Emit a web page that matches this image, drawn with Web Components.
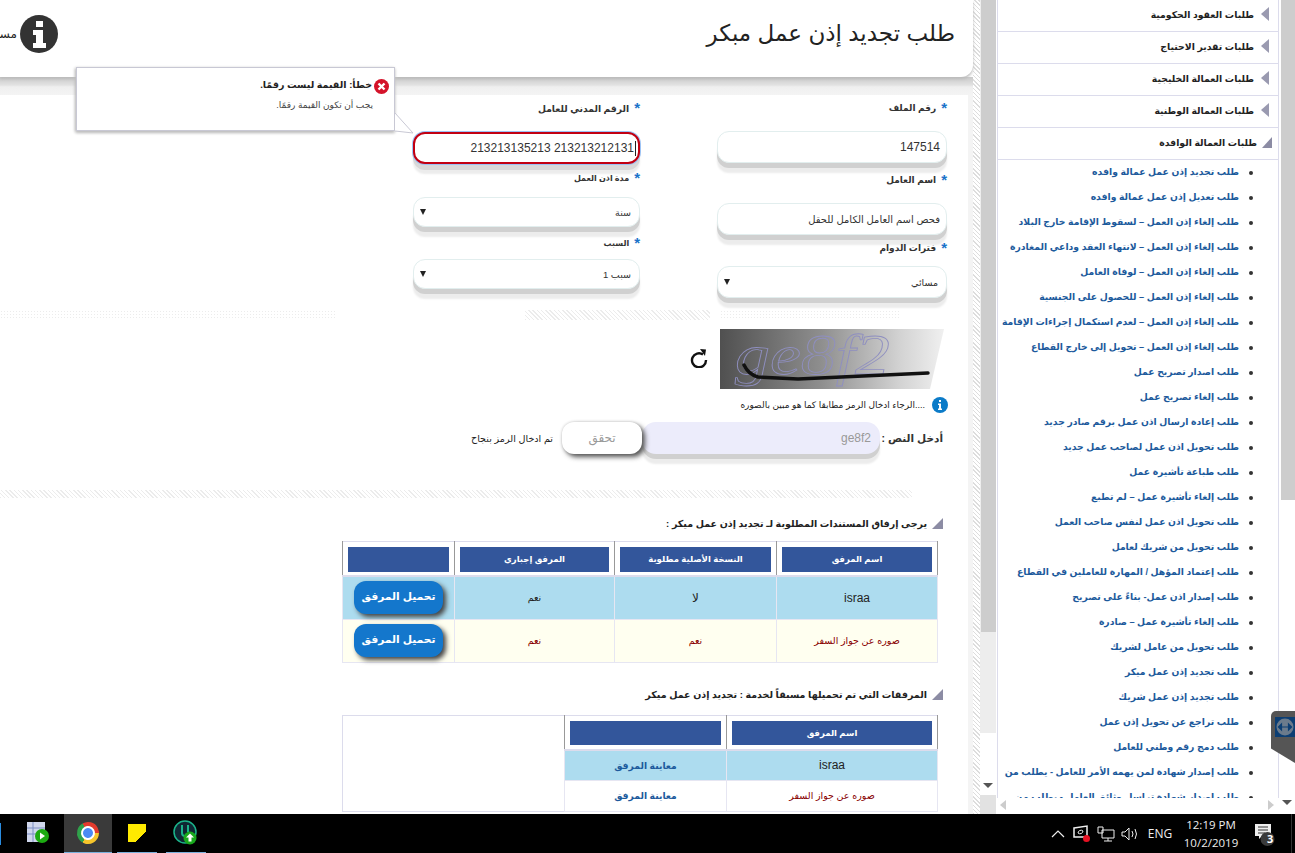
<!DOCTYPE html>
<html lang="ar">
<head>
<meta charset="utf-8">
<title>طلب تجديد إذن عمل مبكر</title>
<style>
  html, body { margin: 0; height: 853px; overflow: hidden; background: #fff; font-family: "Liberation Sans", "DejaVu Sans", sans-serif; }
</style>
</head>
<body>
<app-shell>
  <side-menu slot="side"></side-menu>
  <page-scroll slot="scroll"></page-scroll>
  <page-main slot="main"></page-main>
</app-shell>
<task-bar></task-bar>

<script>
// base: every component only declares getStyles / getTemplate
class Base extends HTMLElement {
  constructor() {
    super();
    this.attachShadow({ mode: "open" });
  }
  getStyles() { return ""; }
  getTemplate() { return ""; }
  render() {
    const template = document.createElement("template");
    template.innerHTML = `<style>${this.getStyles()}</style>${this.getTemplate()}`;
    this.shadowRoot.appendChild(template.content.cloneNode(true));
  }
  connectedCallback() {
    if (!this.shadowRoot.firstChild) this.render();
  }
}

const ARABIC = `"Liberation Sans", "DejaVu Sans", sans-serif`;
const HATCH = "repeating-linear-gradient(45deg,#ececec 0 1px,#fff 1px 3px)";

class AppShell extends Base {
  getStyles() {
    return `
      :host { display: flex; direction: rtl; height: 814px; overflow: hidden; position: relative; }
      .tv { position: absolute; left: 1271px; top: 711px; width: 24px; height: 52px; background: #555; border-radius: 5px 0 0 0;
            clip-path: polygon(0 0,100% 0,100% 100%,0 72%); }
      .tv i { position: absolute; left: 4px; top: 6px; width: 20px; height: 20px; background: #0c3e73; }
      .tv svg { position: absolute; left: 4px; top: 6px; }
    `;
  }
  getTemplate() {
    return `
      <slot name="side"></slot><slot name="scroll"></slot><slot name="main"></slot>
      <div class="tv"><i></i><svg width="20" height="20" viewBox="0 0 20 20"><circle cx="10" cy="10" r="8.5" fill="#6b7b8c"/><path d="M3.5 10h13M3.5 10l3-3v6zM16.5 10l-3-3v6z" fill="#0c3e73" stroke="#0c3e73" stroke-width="1.2"/></svg></div>
    `;
  }
}

class SideMenu extends Base {
  getStyles() {
    return `
      :host { display: flex; width: 299px; height: 814px; flex: none; font-family: ${ARABIC}; background: #fff; }
      .gutter { width: 16px; flex: none; display: flex; flex-direction: column; }
      .gutter .thumb { height: 500px; background: #cdcdcd; margin-left: 2px; }
      .gutter .rest { flex: 1; }
      .gutter .arrow { height: 18px; position: relative; }
      .panel { width: 283px; flex: none; display: flex; flex-direction: column; }
      .clip { height: 798px; width: 282px; box-sizing: border-box; overflow: hidden; border-left: 1px solid #dcdcec; border-right: 1px solid #dcdcec; }
      .cat { height: 32px; box-sizing: border-box; border-bottom: 1px solid #dcdcec; display: flex; align-items: center; padding: 0 9px 3px 0; gap: 7px; font-size: 9.3px; font-weight: bold; color: #222; white-space: nowrap; }
      ul { margin: 0; padding: 0 39px 0 0; list-style: none; }
      li { height: 25px; line-height: 25px; font-size: 9.25px; font-weight: bold; color: #1c5a9c; white-space: nowrap; position: relative; }
      li::before { content: ""; position: absolute; right: -14px; top: 11px; width: 4px; height: 4px; border-radius: 50%; background: #333; }
      .hbar { height: 16px; position: relative; }
      .l { position: absolute; left: 4px; top: 2px; border: 5px solid transparent; border-right: 6px solid #ccc; border-left: 0; }
      .r { position: absolute; right: 5px; top: 2px; border: 5px solid transparent; border-left: 6px solid #ccc; border-right: 0; }
      .down { position: absolute; left: 3px; top: 4px; border: 5px solid transparent; border-top: 5px solid #555; border-bottom: 0; }
    `;
  }
  getTemplate() {
    const cats = ["طلبات العقود الحكومية", "طلبات تقدير الاحتياج", "طلبات العمالة الخليجية", "طلبات العمالة الوطنية"];
    const items = [
      "طلب تجديد إذن عمل عمالة وافده", "طلب تعديل إذن عمل عمالة وافده",
      "طلب إلغاء إذن العمل – لسقوط الإقامة خارج البلاد", "طلب إلغاء إذن العمل – لانتهاء العقد وداعي المغادرة",
      "طلب إلغاء إذن العمل – لوفاة العامل", "طلب إلغاء إذن العمل – للحصول على الجنسية",
      "طلب إلغاء إذن العمل – لعدم استكمال إجراءات الإقامة", "طلب إلغاء إذن العمل – تحويل إلى خارج القطاع",
      "طلب اصدار تصريح عمل", "طلب إلغاء تصريح عمل", "طلب إعادة ارسال اذن عمل برقم صادر جديد",
      "طلب تحويل اذن عمل لصاحب عمل جديد", "طلب طباعة تأشيرة عمل", "طلب إلغاء تأشيرة عمل – لم تطبع",
      "طلب تحويل اذن عمل لنفس صاحب العمل", "طلب تحويل من شريك لعامل",
      "طلب إعتماد المؤهل / المهارة للعاملين في القطاع", "طلب إصدار اذن عمل- بناءً على تصريح",
      "طلب إلغاء تأشيرة عمل – صادرة", "طلب تحويل من عامل لشريك", "طلب تجديد إذن عمل ميكر",
      "طلب تجديد إذن عمل شريك", "طلب تراجع عن تحويل إذن عمل", "طلب دمج رقم وطني للعامل",
      "طلب إصدار شهادة لمن يهمه الأمر للعامل - يطلب من", "طلب إصدار شهادة تراسل وثائق العامل - يطلب من"
    ];
    const tri = `<svg width="8" height="14" viewBox="0 0 8 14"><path d="M8 0v14L0 7z" fill="#9a9ab0"/></svg>`;
    const open = `<svg width="10" height="11" viewBox="0 0 10 11"><path d="M10 0v11H0z" fill="#8c8ca4"/></svg>`;
    return `
      <div class="gutter">
        <div class="thumb"></div><div class="rest"></div><div class="arrow"><i class="down"></i></div>
      </div>
      <div class="panel">
        <div class="clip">
          ${cats.map(c => `<div class="cat">${tri}<span>${c}</span></div>`).join("")}
          <div class="cat" style="gap:5px;padding-right:6px">${open}<span>طلبات العمالة الوافدة</span></div>
          <ul>${items.map(i => `<li>${i}</li>`).join("")}</ul>
        </div>
        <div class="hbar"><i class="r"></i><i class="l"></i></div>
      </div>
    `;
  }
}

class PageScroll extends Base {
  getStyles() {
    return `
      :host { display: flex; flex-direction: column; width: 16px; flex: none; }
      .thumb { height: 632px; background: #cdcdcd; border-left: 1px solid #eee; box-sizing: border-box; }
      .track { height: 101px; background: #ededed; }
      .blank { flex: 1; position: relative; }
      .arrow { position: absolute; left: 3px; top: 50px; border: 5px solid transparent; border-top: 5px solid #555; border-bottom: 0; }
      .end { height: 19px; background: #e2e2e2; }
    `;
  }
  getTemplate() {
    return `<div class="thumb"></div><div class="track"></div><div class="blank"><i class="arrow"></i></div><div class="end"></div>`;
  }
}

class PageMain extends Base {
  getStyles() {
    return `
      :host { display: block; width: 980px; flex: none; height: 814px; overflow: hidden; position: relative; font-family: ${ARABIC}; color: #222; }
      .hatch-side { position: absolute; top: 0; left: 973px; width: 7px; height: 100%; background: repeating-linear-gradient(45deg,#ddd 0 1px,#fff 1px 3px); }
      .side-mask { position: absolute; left: 968px; top: 95px; width: 5px; height: 719px; background: #f4f4f4; }
      .band { height: 18px; background: linear-gradient(#c9c9c9,#e2e2e2 45%,#efefef 55%,#f4f4f4); }
      .form { display: flex; gap: 77px; padding: 5px 33px 0 0; height: 203px; box-sizing: border-box; }
      .col { width: 230px; display: flex; flex-direction: column; }
      .col + .col { width: 227px; }
      .strip { height: 10px; margin-top: 12px; display: flex; }
      .strip i { display: block; height: 100%; }
      .divider { height: 8px; width: 912px; margin: 36px 68px 0 0; background: ${HATCH}; }
      .dot { background-image: radial-gradient(#ececec 35%, transparent 40%); background-size: 3px 3px; }
      .heading { display: flex; align-items: center; gap: 5px; padding-right: 37px; font-size: 9.5px; font-weight: bold; color: #222; height: 16px; white-space: nowrap; }
    `;
  }
  getTemplate() {
    const corner = `<svg width="11" height="11" viewBox="0 0 11 11"><path d="M11 0v11H0z" fill="#8c8ca4"/></svg>`;
    return `
      <page-header></page-header>
      <div class="band"></div>
      <div class="form">
        <div class="col">
          <form-field label="رقم الملف" size="9" gap="15"><text-box value="147514"></text-box></form-field>
          <form-field label="اسم العامل" size="9" gap="15" top="9"><text-box value="فحص اسم العامل الكامل للحقل" small></text-box></form-field>
          <form-field label="فترات الدوام" size="9" gap="10" top="5"><select-box value="مسائي" small></select-box></form-field>
        </div>
        <div class="col">
          <form-field label="الرقم المدني للعامل" size="9.200" gap="16"><text-box value="213213135213 213213212131" invalid></text-box></form-field>
          <form-field label="مدة اذن العمل" size="8" gap="11" top="6"><select-box value="سنة" small h="30"></select-box></form-field>
          <form-field label="السبب" size="8" gap="8" top="8"><select-box value="سبب 1" small h="30"></select-box></form-field>
        </div>
      </div>
      <div class="strip">
        <i style="width:80px"></i><i class="dot" style="width:180px"></i><i style="width:10px"></i>
        <i style="width:185px;background:${HATCH}"></i><i style="width:190px"></i>
        <i class="dot" style="width:335px"></i>
      </div>
      <captcha-box></captcha-box>
      <div class="divider"></div>
      <div class="heading" style="margin-top:17px">${corner}<span>يرجى إرفاق المستندات المطلوبة لـ تجديد إذن عمل ميكر :</span></div>
      <doc-table kind="upload" style="margin-top:10px"></doc-table>
      <div class="heading" style="margin-top:24px">${corner}<span>المرفقات التي تم تحميلها مسبقاً لخدمة : تجديد إذن عمل ميكر</span></div>
      <doc-table kind="view" style="margin-top:12px"></doc-table>
      <div class="side-mask"></div>
      <div class="hatch-side"></div>
      <error-tip></error-tip>
    `;
  }
}

class PageHeader extends Base {
  getStyles() {
    return `
      :host { display: flex; justify-content: space-between; align-items: center; height: 77px; width: 973px; box-sizing: border-box; padding: 0 18px 10px 0; background: #fff; position: relative; z-index: 1; border-bottom-right-radius: 12px; box-shadow: 0 2px 3px #bbb; margin-right: 7px; }
      h1 { margin: 0; font-size: 23px; font-weight: normal; color: #222; white-space: nowrap; }
      .info { display: flex; align-items: center; gap: 3px; direction: rtl; }
      .info span { font-size: 12px; width: 17px; overflow: hidden; white-space: nowrap; color: #222; }
    `;
  }
  getTemplate() {
    return `
      <h1>طلب تجديد إذن عمل مبكر</h1>
      <div class="info">
        <svg width="38" height="38" viewBox="0 0 38 38"><circle cx="19" cy="19" r="19" fill="#333"/><path d="M16 6h7v6h-7zM13 15h10v13h3v5H13v-5h3v-8h-3z" fill="#fff"/></svg>
        <span>مساعدة</span>
      </div>
    `;
  }
}

class FormField extends Base {
  getStyles() {
    const gap = this.getAttribute("gap") || 10;
    const top = this.getAttribute("top") || 0;
    return `
      :host { display: block; margin-top: ${top}px; }
      label { display: flex; gap: 5px; height: 16px; align-items: center; font-size: ${this.getAttribute("size")}px; font-weight: bold; color: #333; white-space: nowrap; }
      b { color: #1a73c9; font-size: 15px; line-height: 10px; height: 10px; font-family: "Liberation Sans", sans-serif; }
      .ctl { margin-top: ${gap}px; }
    `;
  }
  getTemplate() {
    return `<label><b>*</b><span>${this.getAttribute("label")}</span></label><div class="ctl"><slot></slot></div>`;
  }
}

class TextBox extends Base {
  getStyles() {
    const bad = this.hasAttribute("invalid");
    return `
      :host { display: flex; height: 32px; box-sizing: border-box; background: #fff; border-radius: 12px;
        border: ${bad ? "2px solid #c20012" : "1px solid #e2eeee"};
        box-shadow: ${bad ? "0 0 0 1px #9cc3f5, 0 6px 0 #d8d8d8, 0 10px 2px #ececec" : "0 5px 0 #d0d0d0, 0 10px 2px #ececec"};
        align-items: center; padding: 0 ${bad ? 2 : 6}px 0 8px;
        font-size: ${this.hasAttribute("small") ? 10 : 12}px; color: #333; white-space: nowrap; direction: rtl; }
      span.num { unicode-bidi: plaintext; }
      i { width: 1px; height: 15px; background: #222; margin-left: 1px; }
    `;
  }
  getTemplate() {
    const caret = this.hasAttribute("invalid") ? "<i></i>" : "";
    return `${caret}<span class="num">${this.getAttribute("value")}</span>`;
  }
}

class SelectBox extends Base {
  getStyles() {
    const h = this.getAttribute("h") || 32;
    return `
      :host { display: flex; height: ${h}px; box-sizing: border-box; background: #fff; border: 1px solid #e2eeee; border-radius: 12px;
        box-shadow: 0 5px 0 #d0d0d0, 0 10px 2px #ececec; align-items: center; justify-content: space-between;
        padding: 0 8px; font-size: 9.5px; color: #333; white-space: nowrap; }
      i { border: 3px solid transparent; border-top: 6px solid #222; border-bottom: 0; display: block; margin-left: -2px; }
    `;
  }
  getTemplate() {
    return `<span>${this.getAttribute("value")}</span><i></i>`;
  }
}

class CaptchaBox extends Base {
  getStyles() {
    return `
      :host { display: block; margin-top: 9px; padding-right: 36px; font-family: ${ARABIC}; }
      .top { display: flex; align-items: center; gap: 12px; height: 60px; }
      .img { width: 224px; height: 60px; display: block; }
      .img text { direction: ltr; }
      .reload { margin-top: -3px; }
      .hint { display: flex; align-items: center; gap: 7px; height: 16px; margin: 8px -4px 0 0; font-size: 9px; color: #222; white-space: nowrap; }
      .entry { display: flex; align-items: center; margin-top: 9px; height: 32px; }
      .lab { width: 60px; font-size: 10.5px; font-weight: bold; color: #333; white-space: nowrap; margin-right: 1px; margin-left: 3px; }
      .field { width: 238px; height: 32px; box-sizing: border-box; background: #ececfb; border-radius: 14px; box-shadow: 0 5px 0 #d0d0d0, 0 10px 2px #ececec; display: flex; align-items: center; padding: 0 9px; color: #999; font-size: 12px; }
      .btn { width: 80px; height: 32px; background: #fff; border-radius: 12px; box-shadow: 3px 3px 5px #555, 0 0 3px #ccc; display: flex; align-items: center; justify-content: center; color: #999; font-size: 12px; position: relative; }
      .ok { margin-right: 9px; font-size: 9.6px; color: #222; white-space: nowrap; }
    `;
  }
  getTemplate() {
    return `
      <div class="top">
        <svg class="img" viewBox="0 0 224 60" preserveAspectRatio="none">
          <defs><linearGradient id="g" x1="0" x2="1"><stop offset="0" stop-color="#505050"/><stop offset=".45" stop-color="#8e8e8e"/><stop offset=".8" stop-color="#d2d2d2"/><stop offset="1" stop-color="#f0f0f0"/></linearGradient></defs>
          <path d="M0 0H224L210 60H0z" fill="url(#g)"/>
          <text x="15" y="45" direction="ltr" textLength="155" lengthAdjust="spacingAndGlyphs" font-family="Liberation Serif, serif" font-style="italic" font-size="58" fill="none" stroke="#8f8fc0" stroke-width="0.8">ge8f2</text>
          <path d="M24 36q4 9 14 12l40 2 130-6" fill="none" stroke="#111" stroke-width="3.5" stroke-linecap="round"/>
        </svg>
        <svg class="reload" width="18" height="20" viewBox="0 0 18 20"><path d="M13 6.500A7 7 0 1 0 16 12" fill="none" stroke="#111" stroke-width="2.400"/><path d="M10 1l6 0.500-1 6.500z" fill="#111"/></svg>
      </div>
      <div class="hint">
        <svg width="16" height="16" viewBox="0 0 16 16"><circle cx="8" cy="8" r="8" fill="#0b7bc8"/><path d="M7 3h2v2H7zM6 6.500h3v5h1v1.500H6v-1.500h1V8H6z" fill="#fff"/></svg>
        <span>....الرجاء ادخال الرمز مطابقا كما هو مبين بالصوره</span>
      </div>
      <div class="entry">
        <span class="lab">أدخل النص :</span>
        <div class="field">ge8f2</div>
        <div class="btn">تحقق</div>
        <span class="ok">تم ادخال الرمز بنجاح</span>
      </div>
    `;
  }
}

class DocTable extends Base {
  getStyles() {
    return `
      :host { display: block; width: 595px; margin-right: 42px; font-family: ${ARABIC}; }
      table { width: 595px; border-collapse: collapse; table-layout: fixed; border: 1px solid #dcdcec; font-size: 9.5px; color: #222; }
      th { padding: 5px 5px 3px; border-right: 1px solid #999; border-left: 1px solid #999; border-bottom: 2px solid #dcdcec; background: #fff; height: 25px; }
      th div { background: #33569b; color: #fff; font-size: 8.5px; font-weight: bold; height: 25px; line-height: 25px; }
      td { text-align: center; border: 1px solid #e6e6f2; padding: 0; }
      tr.blue td { background: #addcef; }
      tr.cream td { background: #fffff0; color: #800; }
      tr.plain td { background: #fff; color: #800; }
      td.lat { font-size: 12px; color: #222; }
      .up { display: inline-block; width: 89px; height: 33px; line-height: 31px; border-radius: 12px; background: #1477cc; color: #fff; font-size: 10.7px; font-weight: bold; box-shadow: 3px 3px 5px #444; }
      tr td.link { color: #1c5a9c; font-weight: bold; font-size: 9.2px; }
      tr td.empty { border: 0; background: #fff; }
      .empty-head { border: 0; border-right: 1px solid #999; }
    `;
  }
  getTemplate() {
    if (this.getAttribute("kind") === "upload") {
      const btn = `<span class="up">تحميل المرفق</span>`;
      return `
        <table>
          <colgroup><col style="width:161px"><col style="width:162px"><col style="width:160px"><col style="width:112px"></colgroup>
          <tr><th><div>اسم المرفق</div></th><th><div>النسخة الأصلية مطلوبة</div></th><th><div>المرفق إجباري</div></th><th><div>&nbsp;</div></th></tr>
          <tr class="blue" style="height:43px"><td class="lat">israa</td><td class="lat">لا</td><td>نعم</td><td>${btn}</td></tr>
          <tr class="cream" style="height:43px"><td>صوره عن جواز السفر</td><td>نعم</td><td>نعم</td><td>${btn}</td></tr>
        </table>`;
    }
    return `
      <table>
        <colgroup><col style="width:211px"><col style="width:162px"><col style="width:222px"></colgroup>
        <tr style="height:35px"><th><div style="height:24px;line-height:24px">اسم المرفق</div></th><th><div style="height:24px">&nbsp;</div></th><td class="empty-head"></td></tr>
        <tr class="blue" style="height:30px"><td class="lat">israa</td><td class="link">معاينة المرفق</td><td class="empty" rowspan="2"></td></tr>
        <tr class="plain" style="height:31px"><td>صوره عن جواز السفر</td><td class="link">معاينة المرفق</td></tr>
      </table>`;
  }
}

class ErrorTip extends Base {
  getStyles() {
    return `
      :host { position: absolute; left: 76px; top: 67px; width: 319px; height: 64px; box-sizing: border-box; background: #fff; border: 1px solid #c8c8d4; box-shadow: -1px 1px 3px #bbb, 0 2px 3px #ccc; z-index: 3; font-family: ${ARABIC}; }
      .t { position: absolute; right: 22px; top: 11px; font-size: 9.500px; font-weight: bold; color: #222; white-space: nowrap; }
      .s { position: absolute; right: 21px; top: 32px; font-size: 9px; color: #444; white-space: nowrap; }
      .x { position: absolute; right: 5px; top: 11px; }
      .tail { position: absolute; left: 318px; top: 45px; }
    `;
  }
  getTemplate() {
    return `
      <svg class="x" width="15" height="15" viewBox="0 0 15 15"><circle cx="7.500" cy="7.500" r="7.500" fill="#d4132a"/><path d="M4.500 4.500l6 6M10.500 4.500l-6 6" stroke="#fff" stroke-width="2.400"/></svg>
      <span class="t">خطأ: القيمة ليست رقمًا.</span>
      <span class="s">يجب أن تكون القيمة رقمًا.</span>
      <svg class="tail" width="20" height="22" viewBox="0 0 20 22"><path d="M0 0L18 20 0 18z" fill="#fff"/><path d="M0 0L18 20 0 18" fill="none" stroke="#c8c8d4"/></svg>
    `;
  }
}

class TaskBar extends Base {
  getStyles() {
    return `
      :host { display: flex; justify-content: space-between; height: 39px; background: #000; color: #eee; font-family: "Open Sans", "Liberation Sans", sans-serif; direction: ltr; overflow: hidden; }
      .left { display: flex; width: 220px; position: relative; }
      .edge { width: 1px; height: 22px; margin-top: 9px; background: #2a8ce0; }
      .app { height: 39px; box-sizing: border-box; display: flex; align-items: center; justify-content: center; border-bottom: 1px solid #7ab0dc; flex: none; }
      .tray { display: flex; align-items: center; height: 39px; position: relative; }
      .tray > * { flex: none; display: flex; justify-content: center; align-items: center; }
      .clock { flex-direction: column; font-size: 11.500px; width: 68px; line-height: 18px; }
      .eng { font-size: 12px; width: 34px; }
      .ico { width: 24px; }
      .chrome { width: 22px; height: 22px; border-radius: 50%; background: conic-gradient(#e33b2e 0 120deg,#f7c52b 120deg 240deg,#2fa24a 240deg 360deg); position: relative; transform: rotate(-30deg); }
      .chrome::after { content: ""; position: absolute; left: 6px; top: 6px; width: 10px; height: 10px; border-radius: 50%; background: #4a8af4; box-shadow: 0 0 0 2px #fff; }
      .sticky { width: 18px; height: 18px; background: linear-gradient(135deg,#ffea00 72%,#000 72%); }
    `;
  }
  getTemplate() {
    return `
      <div class="left">
        <div class="edge"></div>
        <div class="app" style="width:63px;border-bottom-color:#000;padding-left:11px">
          <svg width="26" height="26" viewBox="0 0 26 26"><rect x="2" y="2" width="18" height="20" fill="#cfd6ec"/><path d="M2 8h18M2 14h18M8 2v20" stroke="#7d8fc4"/><circle cx="17" cy="16" r="7" fill="#1cab11"/><path d="M15 12.500l5 3.500-5 3.500z" fill="#fff"/></svg>
        </div>
        <div class="app" style="width:48px;background:#3a3a3a"><div class="chrome"></div></div>
        <div class="app" style="width:40px;margin-left:5px"><div class="sticky"></div></div>
        <div class="app" style="width:40px;margin-left:9px">
          <svg width="28" height="28" viewBox="0 0 28 28"><circle cx="13" cy="13" r="11" fill="#0f2733" stroke="#1bb38a" stroke-width="1.500"/><path d="M10 6v8q0 3 3 3M16 6v7" fill="none" stroke="#1bb38a" stroke-width="2"/><circle cx="18" cy="19" r="6.500" fill="#19a81c"/><path d="M18 14.500l-4 4h2.500v4h3v-4H22z" fill="#fff"/></svg>
        </div>
      </div>
      <div class="tray">
        <span class="ico"><svg width="14" height="8" viewBox="0 0 14 8"><path d="M1 7l6-6 6 6" fill="none" stroke="#eee" stroke-width="1.200"/></svg></span>
        <span class="ico"><svg width="20" height="18" viewBox="0 0 20 18"><path d="M2 3l13-2v11H2z" fill="none" stroke="#eee" stroke-width="1.500"/><path d="M6 8a3 3 0 0 1 5-2M11 6a3 3 0 0 1-5 2" fill="none" stroke="#eee"/><circle cx="14.500" cy="13.500" r="3.500" fill="#e81123"/></svg></span>
        <span class="ico"><svg width="18" height="16" viewBox="0 0 18 16"><path d="M1 1h5v6H1zM5 4h12v8H5zM11 12v3M7 15h8" fill="none" stroke="#eee"/></svg></span>
        <span class="ico"><svg width="18" height="14" viewBox="0 0 18 14"><path d="M1 5h3l4-4v12l-4-4H1zM11 4q2 3 0 6M14 2q3 5 0 10" fill="none" stroke="#eee"/></svg></span>
        <span class="eng" style="margin-left:1px">ENG</span>
        <span class="clock"><span>12:19 PM</span><span>10/2/2019</span></span>
        <span class="ico" style="width:32px;margin-left:5px;position:relative"><svg width="28" height="28" viewBox="0 0 28 28"><path d="M3 4h16v12h-9l-3 3v-3H3z" fill="#eee"/><path d="M6 7h10M6 10h10M6 13h7" stroke="#333"/><circle cx="15.500" cy="19" r="7" fill="#3a3a3a"/></svg><span style="position:absolute;left:17px;top:11px;font-size:11px;color:#fff;font-weight:bold">3</span></span>
        <span style="width:1px;height:39px;background:#333;margin-left:9px"></span>
        <span style="width:3px"></span>
      </div>
    `;
  }
}

customElements.define("app-shell", AppShell);
customElements.define("side-menu", SideMenu);
customElements.define("page-scroll", PageScroll);
customElements.define("page-main", PageMain);
customElements.define("page-header", PageHeader);
customElements.define("form-field", FormField);
customElements.define("text-box", TextBox);
customElements.define("select-box", SelectBox);
customElements.define("captcha-box", CaptchaBox);
customElements.define("doc-table", DocTable);
customElements.define("error-tip", ErrorTip);
customElements.define("task-bar", TaskBar);
</script>
</body>
</html>
